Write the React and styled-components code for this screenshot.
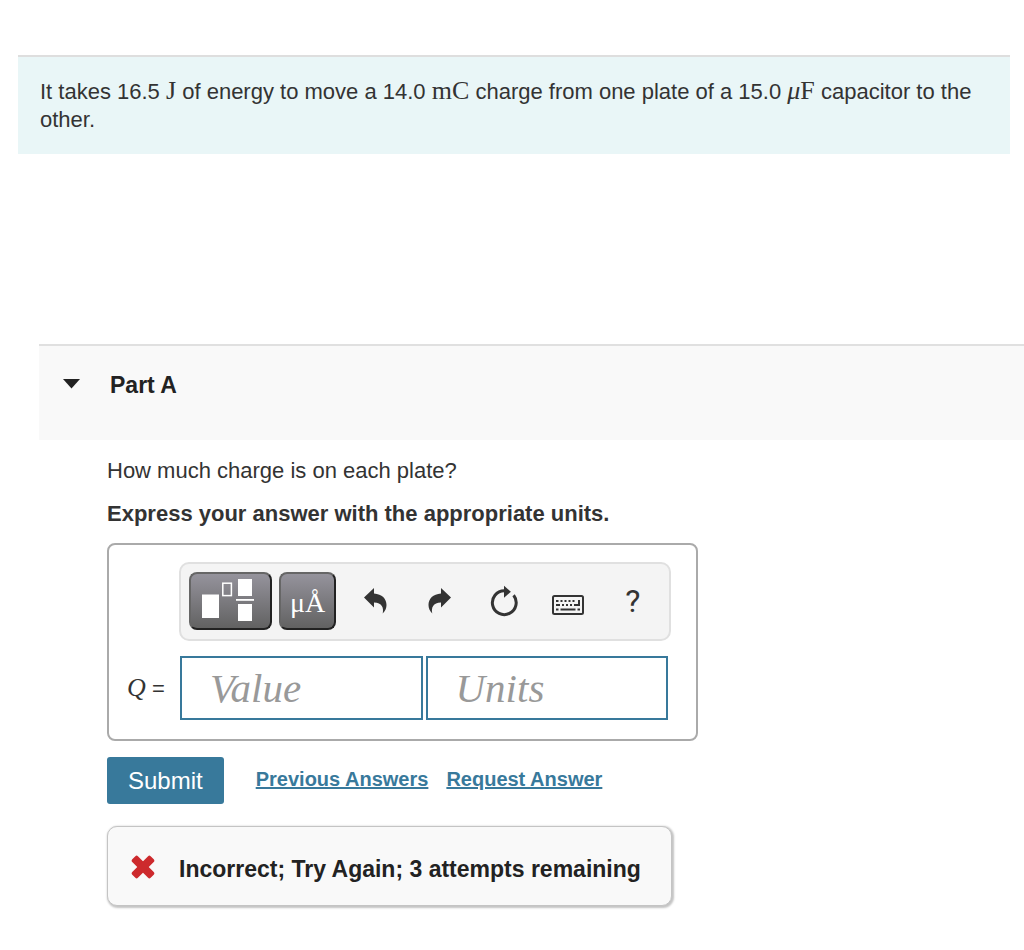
import styled, { createGlobalStyle } from "styled-components";
import { useState } from "react";

const GlobalStyle = createGlobalStyle`
  * {
    box-sizing: border-box;
  }

  body {
    margin: 0;
    background: #fff;
    color: #333;
    font-family: "Liberation Sans", Arial, sans-serif;
    font-size: 22px;
    line-height: 28px;
  }
`;

const Page = styled.main`
  padding: 55px 0 32px;
`;

const Introduction = styled.section`
  margin: 0 14px 190px 18px;
  padding: 21px 22px 20px;
  border-top: 2px solid #dedede;
  background: #e9f6f7;
`;

const Paragraph = styled.p`
  margin: 0;
`;

const MathUnit = styled.span`
  font-family: "Liberation Serif", "Times New Roman", serif;
  font-size: 26px;
  line-height: 1;
`;

const PartHeader = styled.header`
  display: flex;
  align-items: flex-start;
  margin-left: 39px;
  min-height: 96px;
  padding: 25px 23px;
  border-top: 2px solid #e0e0e0;
  background: #f9f9f9;
`;

const CollapseButton = styled.button`
  display: flex;
  align-items: center;
  gap: 29px;
  padding: 0;
  border: 0;
  background: none;
  color: #222;
  font: inherit;
  font-size: 23px;
  font-weight: bold;
  cursor: pointer;
`;

const PartTitle = styled.h2`
  margin: 0;
  font-size: inherit;
`;

const PartBody = styled.div`
  padding: 17px 24px 0 107px;
`;

const Instruction = styled.p`
  margin: 15px 0;
  font-weight: bold;
`;

const AnswerBox = styled.div`
  max-width: 591px;
  padding: 17px 25px 19px 18px;
  border: 2px solid #aaa;
  border-radius: 8px;
`;

const Toolbar = styled.div`
  display: flex;
  align-items: center;
  margin-left: 52px;
  padding: 8px 4px 9px 8px;
  border: 2px solid #e0e0e0;
  border-radius: 10px;
  background: #f4f4f4;
`;

const PaletteButton = styled.button`
  display: flex;
  flex: none;
  align-items: center;
  justify-content: center;
  width: ${(props) => (props.$wide ? "83px" : "57px")};
  height: 58px;
  margin-right: 7px;
  padding: 4px 0 0;
  border: 2px solid #666;
  border-right-color: #222;
  border-bottom-color: #222;
  border-radius: 8px;
  background: linear-gradient(#95939c, #626262);
  color: #fff;
  font-family: "Liberation Serif", "Times New Roman", serif;
  font-size: 28px;
  cursor: pointer;
`;

const ToolButton = styled.button`
  display: flex;
  flex: 1 1 64px;
  align-items: center;
  justify-content: center;
  height: 58px;
  padding: 0;
  border: 0;
  background: none;
  color: #333;
  font-family: Roboto, sans-serif;
  font-size: 32px;
  cursor: pointer;
`;

const EntryRow = styled.div`
  display: flex;
  align-items: center;
  gap: 3px;
  margin: 15px 3px 0 0;
`;

const EntryLabel = styled.label`
  flex: none;
  width: 50px;
`;

const Variable = styled.i`
  font-family: "Liberation Serif", "Times New Roman", serif;
  font-size: 26px;
`;

const EntryInput = styled.input`
  flex: 1 1 0;
  min-width: 0;
  height: 64px;
  padding: 0 28px;
  border: 2px solid #38799b;
  border-radius: 0;
  color: #333;
  font-family: "Liberation Serif", "Times New Roman", serif;
  font-size: 41px;

  &::placeholder {
    color: #999;
    font-style: italic;
    opacity: 1;
  }
`;

const Actions = styled.div`
  display: flex;
  align-items: center;
  gap: 18px;
  margin: 16px 0 22px;
`;

const SubmitButton = styled.button`
  height: 47px;
  margin-right: 14px;
  padding: 0 21px;
  border: 0;
  border-radius: 3px;
  background: #38799b;
  color: #fff;
  font-family: inherit;
  font-size: 24px;
  cursor: pointer;
`;

const ActionLink = styled.a`
  padding-bottom: 4px;
  color: #38799b;
  font-size: 20px;
  font-weight: bold;
`;

const Feedback = styled.div`
  display: flex;
  align-items: center;
  gap: 24px;
  width: fit-content;
  min-height: 80px;
  padding: 5px 30px 0 23px;
  border: 1px solid #c4c4c4;
  border-radius: 10px;
  background: #f9f9f9;
  box-shadow: 1px 1px 2px 1px #c4c4c4;
  color: #222;
  font-size: 23px;
  font-weight: bold;
`;

const CaretIcon = ({ open }) => (
  <svg width="19" height="12" viewBox="0 0 19 12" aria-hidden="true">
    <path d={open ? "M1 0H18L9.5 9.5Z" : "M5 0L15 6L5 12Z"} fill="currentColor" />
  </svg>
);

const TemplatesIcon = () => (
  <svg width="59" height="50" viewBox="0 0 59 50" aria-hidden="true">
    <g fill="#fff">
      <rect x="1" y="16.5" width="17" height="23.5" />
      <rect x="37" y="1" width="14" height="17" />
      <rect x="35" y="21" width="18" height="1.8" />
      <rect x="37" y="26" width="14" height="17" />
    </g>
    <rect x="21.8" y="5.2" width="8.6" height="12.4" fill="none" stroke="#fff" strokeWidth="1.5" />
  </svg>
);

const UndoIcon = ({ flipped }) => (
  <svg width="25" height="30" viewBox="0 0 25 30" aria-hidden="true">
    <path
      transform={flipped ? "translate(25 0) scale(-1 1)" : undefined}
      d="M1 11.5L11 2V7.4C19 8 23.5 12.5 23.5 19C23.5 22 22.3 25 19.7 27.6C21 21.5 19 16.8 11 16.4V21.5Z"
      fill="currentColor"
    />
  </svg>
);

const ResetIcon = () => (
  <svg width="29" height="34" viewBox="0 0 29 34" aria-hidden="true">
    <path d="M23.6 11.3A11.9 11.9 0 1 1 14.3 6.8" fill="none" stroke="currentColor" strokeWidth="3" />
    <path d="M14 1.8L20.9 7.7L14 13.7Z" fill="currentColor" />
  </svg>
);

const KeyboardIcon = () => (
  <svg width="34" height="28" viewBox="0 0 34 28" aria-hidden="true">
    <rect x="2" y="9" width="30" height="18" rx="1.5" fill="none" stroke="currentColor" strokeWidth="2" />
    <g stroke="currentColor" strokeWidth="2">
      <path d="M5 14H7.5M9.5 14H11.5M13.5 14H15.5M17.5 14H19.5M21.5 14H23.5" />
      <path d="M5 18H9M11 18H13M15 18H17M19 18H21M23 18H29M28 13V19" />
      <path d="M5 22.5H7.5M9.5 22.5H24.5M26.5 22.5H29" />
    </g>
  </svg>
);

const IncorrectIcon = () => (
  <svg width="24" height="28" viewBox="0 0 24 28" aria-hidden="true">
    <g transform="translate(12 12)" fill="#cd2a2d">
      <rect x="-13" y="-4" width="26" height="8" rx="1.8" transform="rotate(45)" />
      <rect x="-13" y="-4" width="26" height="8" rx="1.8" transform="rotate(-45)" />
    </g>
  </svg>
);

const App = () => {
  const [open, setOpen] = useState(true);
  const [value, setValue] = useState("");
  const [units, setUnits] = useState("");

  const reset = () => {
    setValue("");
    setUnits("");
  };

  return (
    <Page>
      <GlobalStyle />
      <Introduction>
        <Paragraph>
          It takes 16.5 <MathUnit>J</MathUnit> of energy to move a 14.0{" "}
          <MathUnit>mC</MathUnit> charge from one plate of a 15.0{" "}
          <MathUnit>
            <i>μ</i>F
          </MathUnit>{" "}
          capacitor to the other.
        </Paragraph>
      </Introduction>
      <PartHeader>
        <CollapseButton aria-expanded={open} onClick={() => setOpen(!open)}>
          <CaretIcon open={open} />
          <PartTitle>Part A</PartTitle>
        </CollapseButton>
      </PartHeader>
      {open && (
        <PartBody>
          <Paragraph>How much charge is on each plate?</Paragraph>
          <Instruction>Express your answer with the appropriate units.</Instruction>
          <AnswerBox>
            <Toolbar>
              <PaletteButton $wide aria-label="Templates">
                <TemplatesIcon />
              </PaletteButton>
              <PaletteButton>μÅ</PaletteButton>
              <ToolButton aria-label="Undo">
                <UndoIcon />
              </ToolButton>
              <ToolButton aria-label="Redo">
                <UndoIcon flipped />
              </ToolButton>
              <ToolButton aria-label="Reset" onClick={reset}>
                <ResetIcon />
              </ToolButton>
              <ToolButton aria-label="Keyboard shortcuts">
                <KeyboardIcon />
              </ToolButton>
              <ToolButton>?</ToolButton>
            </Toolbar>
            <EntryRow>
              <EntryLabel htmlFor="value">
                <Variable>Q</Variable> =
              </EntryLabel>
              <EntryInput
                id="value"
                placeholder="Value"
                value={value}
                onChange={(e) => setValue(e.target.value)}
              />
              <EntryInput
                aria-label="Units"
                placeholder="Units"
                value={units}
                onChange={(e) => setUnits(e.target.value)}
              />
            </EntryRow>
          </AnswerBox>
          <Actions>
            <SubmitButton>Submit</SubmitButton>
            <ActionLink href="#previous">Previous Answers</ActionLink>
            <ActionLink href="#request">Request Answer</ActionLink>
          </Actions>
          <Feedback role="status">
            <IncorrectIcon />
            Incorrect; Try Again; 3 attempts remaining
          </Feedback>
        </PartBody>
      )}
    </Page>
  );
};

export default App;
